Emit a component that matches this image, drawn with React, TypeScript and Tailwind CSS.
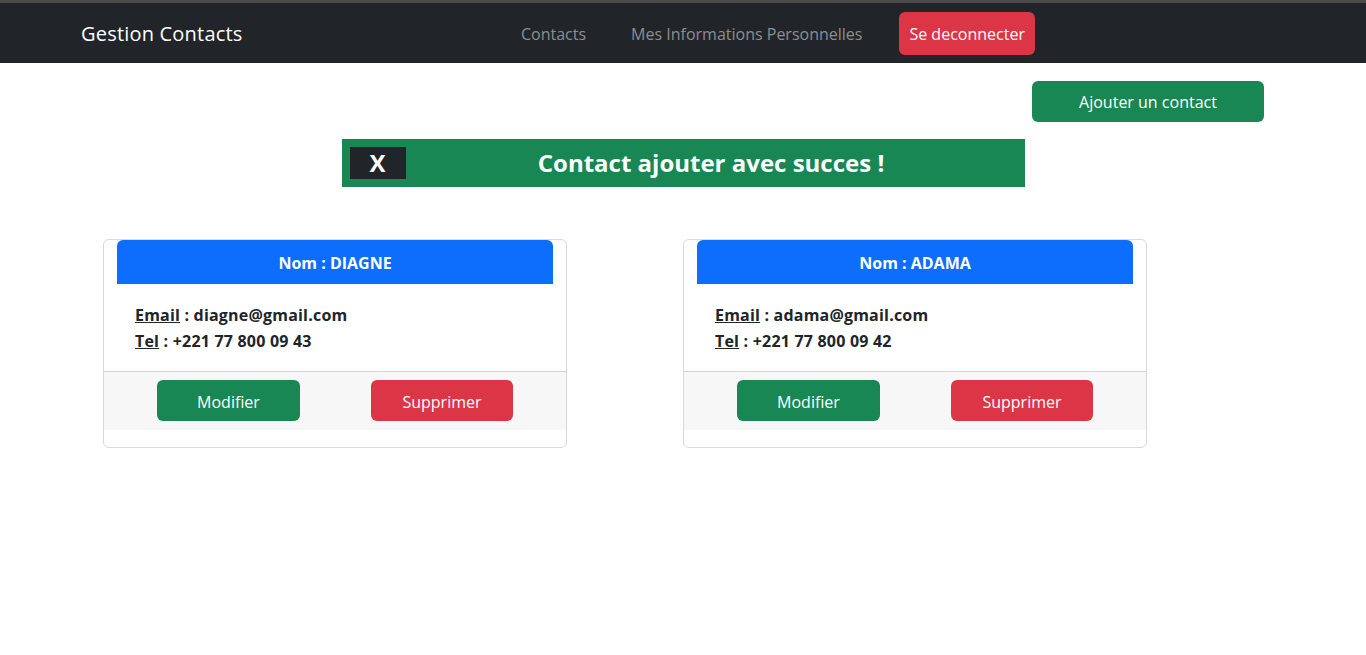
import React from "react";

type Contact = { nom: string; email: string; tel: string };

const contacts: Contact[] = [
  { nom: "DIAGNE", email: "diagne@gmail.com", tel: "+221 77 800 09 43" },
  { nom: "ADAMA", email: "adama@gmail.com", tel: "+221 77 800 09 42" },
];

const ContactCard = ({ contact }: { contact: Contact }) => (
  <div className="w-[464px] h-[209px] border border-[#d9d9d9] rounded-[6px] flex flex-col">
    {/* Header */}
    <div className="mx-[13px] h-[44px] pt-[2px] bg-[#0d6efd] rounded-t-[6px] flex items-center justify-center text-white font-bold text-[16px]">
      Nom : {contact.nom}
    </div>

    {/* Body */}
    <div className="h-[87px] pl-[31px] pt-[18px] text-[16px] font-bold text-[#212529] leading-[26px] tracking-[0.2px]">
      <div>
        <span className="underline">Email</span> : {contact.email}
      </div>
      <div>
        <span className="underline">Tel</span> : {contact.tel}
      </div>
    </div>

    {/* Footer */}
    <div className="border-t border-[#d3d3d3] bg-[#f7f7f7] h-[59px] flex items-start pt-[8px] pl-[53px] gap-[71px]">
      <button className="w-[143px] h-[41px] pt-[2px] rounded-[6px] bg-[#198754] text-white text-[16px]">
        Modifier
      </button>
      <button className="w-[142px] h-[41px] pt-[2px] rounded-[6px] bg-[#dc3545] text-white text-[16px]">
        Supprimer
      </button>
    </div>
  </div>
);

export default function App() {
  return (
    <div
      className="min-h-[655px] bg-white"
      style={{ fontFamily: '"Open Sans", "Noto Sans", sans-serif' }}
    >
      {/* Navbar */}
      <nav className="border-t-[3px] border-[#4b4b4b] bg-[#212529] h-[63px] flex items-center">
        <div className="w-[513px] pl-[81px] pt-[2px] text-white text-[20px] tracking-[0.2px]">
          Gestion Contacts
        </div>
        <div className="flex items-center text-[16px] text-[#8c8e91]">
          <a className="px-[8px] pt-[2px]">Contacts</a>
          <a className="ml-[29px] px-[8px] pt-[2px]">Mes Informations Personnelles</a>
          <button className="ml-[29px] h-[43px] px-[10px] pt-[2px] rounded-[6px] bg-[#dc3545] text-white text-[16px]">
            Se deconnecter
          </button>
        </div>
      </nav>

      {/* Add button */}
      <div className="flex justify-end pr-[102px] pt-[18px]">
        <button className="w-[232px] h-[41px] rounded-[6px] bg-[#198754] text-white text-[16px]">
          Ajouter un contact
        </button>
      </div>

      {/* Success alert */}
      <div className="flex justify-center mt-[17px]">
        <div className="w-[683px] h-[48px] bg-[#198754] flex items-center px-[8px]">
          <button className="w-[56px] h-[32px] bg-[#212529] text-white text-[24px] font-bold flex items-center justify-center">
            X
          </button>
          <h3 className="flex-1 text-center text-white text-[24px] font-bold">
            Contact ajouter avec succes !
          </h3>
        </div>
      </div>

      {/* Cards */}
      <div className="flex gap-[116px] pl-[103px] mt-[52px]">
        {contacts.map((c) => (
          <ContactCard key={c.nom} contact={c} />
        ))}
      </div>
    </div>
  );
}
